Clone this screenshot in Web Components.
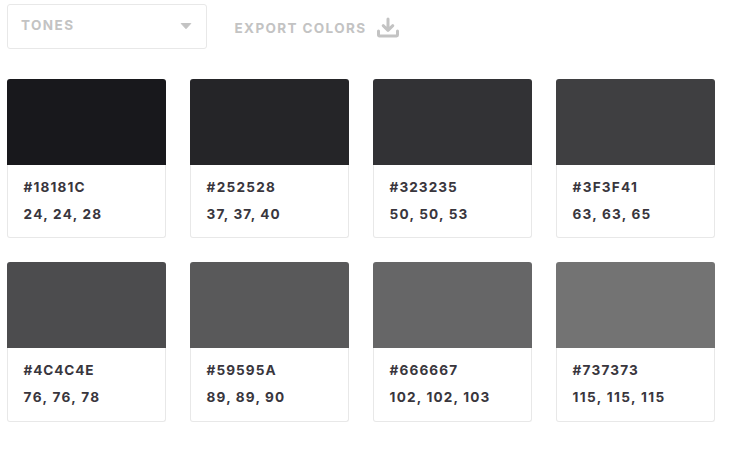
<!DOCTYPE html>
<html lang="en">
<head>
<meta charset="utf-8">
<title>Tones</title>
<style>
body { margin: 0; background: #fff; font-family: Inter, "Open Sans", sans-serif; }
</style>
</head>
<body>
<tone-palette></tone-palette>
<script>
// A single line of text whose tracking is adjusted to a given advance width.
class TrackedText extends HTMLElement {
  connectedCallback() {
    if (this.shadowRoot) return;
    const root = this.attachShadow({ mode: 'open' });
    root.innerHTML = `<style>
      :host { display: block; white-space: nowrap; }
      span { display: inline-block; }
    </style><span></span>`;
    const span = root.querySelector('span');
    span.textContent = this.getAttribute('text');
    const gap = (Number(this.getAttribute('width')) - span.getBoundingClientRect().width) / (span.textContent.length - 1);
    span.style.letterSpacing = gap.toFixed(3) + 'px';
    span.style.marginRight = (-gap).toFixed(3) + 'px';
  }
}
customElements.define('tracked-text', TrackedText);

class ToneSelect extends HTMLElement {
  constructor() {
    super();
    this.attachShadow({ mode: 'open' }).innerHTML = `<style>
      :host { display: flex; box-sizing: border-box; width: 200px; height: 45px; padding: 0 14px 3px 13px;
        border: 1px solid #e8e8e8; border-radius: 3px; align-items: center; justify-content: space-between;
        font-size: 13.5px; line-height: 20px; font-weight: 750; color: #c3c3c3; }
      svg { display: block; margin-top: 2px; }
    </style><slot></slot><svg width="12" height="7" viewBox="0 0 12 7"><path d="M1.2.5h9.6L6 5.7z" fill="#c3c3c3" stroke="#c3c3c3" stroke-linejoin="round"/></svg>`;
  }
}
customElements.define('tone-select', ToneSelect);

class ExportLink extends HTMLElement {
  constructor() {
    super();
    this.attachShadow({ mode: 'open' }).innerHTML = `<style>
      :host { display: flex; align-items: center; gap: 12px; padding-top: 3px;
        font-size: 13.5px; line-height: 20px; font-weight: 750; color: #c3c3c3; }
      svg { display: block; margin-bottom: 1px; }
    </style><slot></slot><svg width="22" height="21" viewBox="0 0 22 21" fill="none" stroke="#c3c3c3" stroke-width="3" stroke-linecap="round" stroke-linejoin="round"><path d="M11 2v10.5M6.2 8.7l4.8 4.6 4.8-4.6"/><path d="M1.5 14v4a.9.9 0 0 0 .9.9h17.2a.9.9 0 0 0 .9-.9v-4"/></svg>`;
  }
}
customElements.define('export-link', ExportLink);

class ToneCard extends HTMLElement {
  connectedCallback() {
    if (this.shadowRoot) return;
    this.attachShadow({ mode: 'open' }).innerHTML = `<style>
      :host { display: flex; flex-direction: column; height: var(--card-height, 159px); }
      .swatch { height: 86px; flex: none; border-radius: 3px 3px 0 0; background: ${this.getAttribute('hex')}; }
      .info { flex: 1; box-sizing: border-box; border: 1px solid #e8e8e8; border-top: 0; border-radius: 0 0 3px 3px;
        padding: 9px 15px 0 15.6px; font-size: 13.6px; line-height: 27px; font-weight: 650; color: #39363d; }
    </style><div class="swatch"></div><div class="info"><slot></slot></div>`;
  }
}
customElements.define('tone-card', ToneCard);

class TonePalette extends HTMLElement {
  constructor() {
    super();
    const tones = [
      ['#18181C', 61, '24, 24, 28', 77.6], ['#252528', 68.2, '37, 37, 40', 73.2],
      ['#323235', 67.2, '50, 50, 53', 77.8], ['#3F3F41', 64.2, '63, 63, 65', 77.6],
      ['#4C4C4E', 70, '76, 76, 78', 75.6], ['#59595A', 69, '89, 89, 90', 77.6],
      ['#666667', 67.5, '102, 102, 103', 99.8], ['#737373', 65.2, '115, 115, 115', 91.6]
    ];
    this.attachShadow({ mode: 'open' }).innerHTML = `<style>
      :host { display: block; padding: 4px 24px 0 7px; }
      header { display: flex; height: 45px; gap: 27.5px; margin-bottom: 30px; }
      main { display: grid; grid-template-columns: repeat(4, 159px); gap: 24px; }
      tone-card:nth-child(n+5) { --card-height: 160px; }
    </style>
    <header>
      <tone-select><tracked-text text="TONES" width="52"></tracked-text></tone-select>
      <export-link><tracked-text text="EXPORT COLORS" width="130.5"></tracked-text></export-link>
    </header>
    <main>${tones.map(([hex, hw, rgb, rw]) => `<tone-card hex="${hex}"><tracked-text text="${hex}" width="${hw}"></tracked-text><tracked-text text="${rgb}" width="${rw}"></tracked-text></tone-card>`).join('')}</main>`;
  }
}
customElements.define('tone-palette', TonePalette);
</script>
</body>
</html>
